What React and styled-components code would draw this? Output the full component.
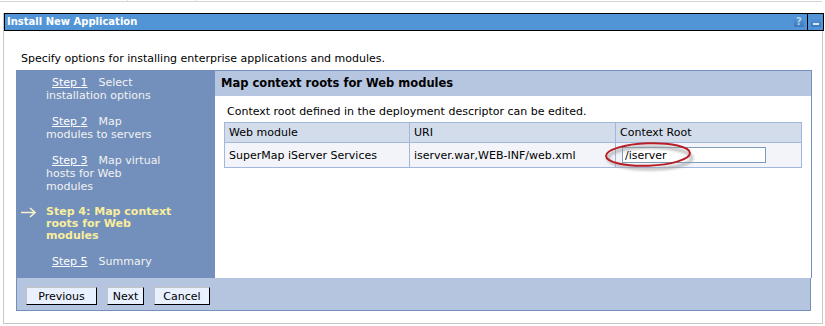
import React from "react";
import styled, { createGlobalStyle } from "styled-components";

const GlobalStyle = createGlobalStyle`
  html, body {
    margin: 0;
    padding: 0;
    background: #ffffff;
  }
  body {
    font-family: "DejaVu Sans", Verdana, sans-serif;
    font-size: 11px;
    color: #000000;
  }
`;

const TopStrip = styled.div`
  display: flex;
  width: 822px;
  height: 1px;
  border-bottom: 1px solid #d6d6d6;
`;

const Tick = styled.div`
  width: ${(p) => p.$w}px;
  height: 1px;
  border-right: 1px solid #e2e2e2;
`;

const Frame = styled.div`
  margin: 11px 0 0 3px;
  width: 818px;
  border: 1px solid #c8c8c8;
  border-top: none;
  padding-bottom: 12px;
`;

const TitleBar = styled.div`
  box-sizing: border-box;
  width: 820px;
  height: 18px;
  display: flex;
  align-items: stretch;
  background: #5295d6;
  border: 1px solid #000000;
`;

const TitleText = styled.div`
  flex: 1;
  padding-left: 2px;
  line-height: 16px;
  font-weight: bold;
  font-size: 10px;
  color: #ffffff;
`;

const TitleCell = styled.div`
  display: flex;
  align-items: center;
  padding: 0 ${(p) => p.$pr}px 0 ${(p) => p.$pl}px;
  border-left: ${(p) => (p.$sep ? "1px solid #000" : "none")};
`;

const IconBox = styled.div`
  width: 10px;
  height: 10px;
  display: flex;
  align-items: center;
  justify-content: center;
  background: linear-gradient(#5a98d8, #3b79bd);
  color: #b9d4ef;
  font-weight: bold;
  font-size: 10px;
  line-height: 10px;
`;

const Dash = styled.div`
  width: 6px;
  height: 2px;
  margin-top: 4px;
  background: #dce8f6;
`;

const Intro = styled.div`
  margin: 21px 0 5px 17px;
  line-height: 13px;
`;

const Panel = styled.div`
  margin-left: 12px;
  width: 795px;
`;

const Body = styled.div`
  display: flex;
  height: 208px;
`;

const Nav = styled.div`
  width: 199px;
  flex-shrink: 0;
  background: #7390bc;
  padding-top: 6px;
  box-sizing: border-box;
  color: #f2f2f2;
`;

const NavItem = styled.div`
  padding-left: 30px;
  line-height: 13px;
  margin-bottom: 13px;
`;

const NavLine = styled.div`
  padding-left: ${(p) => (p.$first ? 6 : 0)}px;
`;

const StepLink = styled.span`
  text-decoration: underline;
  color: #ffffff;
  margin-right: 11px;
`;

const CurrentItem = styled.div`
  display: flex;
  padding-left: 4px;
  margin-bottom: 13px;
  line-height: 12px;
  font-weight: bold;
  color: #f8ee9c;
`;

const Arrow = styled.svg`
  width: 26px;
  height: 12px;
  flex-shrink: 0;
`;

const Main = styled.div`
  flex: 1;
  border-top: 1px solid #7390bc;
  border-right: 1px solid #7390bc;
  background: #ffffff;
`;

const MainHeader = styled.div`
  height: 25px;
  line-height: 25px;
  padding-left: 6px;
  background: #b6c6e0;
  font-weight: bold;
  font-size: 11.5px;
`;

const MainContent = styled.div`
  padding: 9px 9px 0 9px;
`;

const Desc = styled.div`
  padding-left: 3px;
  line-height: 13px;
  margin-bottom: 4px;
`;

const Table = styled.table`
  width: 577px;
  border-collapse: collapse;
  table-layout: fixed;
`;

const Th = styled.th`
  height: 19px;
  padding: 0 0 0 4px;
  text-align: left;
  font-weight: normal;
  background: #d3dceb;
  border: 1px solid #a2b7dc;
`;

const Td = styled.td`
  position: relative;
  height: 24px;
  padding: 0 0 0 4px;
  background: #f2f4f9;
  border: 1px solid #a2b7dc;
`;

const Input = styled.input`
  box-sizing: border-box;
  width: 144px;
  height: 16px;
  margin-left: 2px;
  padding: 0 2px;
  border: 1px solid #7f9db9;
  font-family: "DejaVu Sans", Verdana, sans-serif;
  font-size: 11px;
  background: #ffffff;
  vertical-align: middle;
`;

const Circle = styled.svg`
  position: absolute;
  left: -14px;
  top: -4px;
  pointer-events: none;
`;

const ButtonBar = styled.div`
  display: flex;
  gap: 10px;
  height: 33px;
  padding: 9px 0 0 9px;
  box-sizing: border-box;
  background: #b5c5df;
  border: 1px solid #7390bc;
  border-top: none;
`;

const Button = styled.button`
  box-sizing: border-box;
  width: ${(p) => p.$w}px;
  height: 18px;
  padding: 0;
  background: #e9f0ff;
  border: 1px solid;
  border-color: #c4c4c4 #000000 #000000 #c4c4c4;
  font-family: "DejaVu Sans", Verdana, sans-serif;
  font-size: 11px;
  color: #000000;
`;

const steps = [
  { n: 1, label: "Select", rest: ["installation options"] },
  { n: 2, label: "Map", rest: ["modules to servers"] },
  { n: 3, label: "Map virtual", rest: ["hosts for Web", "modules"] },
];

export default function App() {
  return (
    <>
      <GlobalStyle />
      <TopStrip>
        <Tick $w={127} />
        <Tick $w={67} />
      </TopStrip>
      <Frame>
        <TitleBar>
          <TitleText>Install New Application</TitleText>
          <TitleCell $pl={0} $pr={3}>
            <IconBox>?</IconBox>
          </TitleCell>
          <TitleCell $sep $pl={3} $pr={2}>
            <IconBox>
              <Dash />
            </IconBox>
          </TitleCell>
        </TitleBar>
        <Intro>Specify options for installing enterprise applications and modules.</Intro>
        <Panel>
          <Body>
            <Nav>
              {steps.map((s) => (
                <NavItem key={s.n}>
                  <NavLine $first>
                    <StepLink>Step {s.n}</StepLink>
                    {s.label}
                  </NavLine>
                  {s.rest.map((r) => (
                    <NavLine key={r}>{r}</NavLine>
                  ))}
                </NavItem>
              ))}
              <CurrentItem>
                <Arrow viewBox="0 0 26 12">
                  <path d="M1 6.5 H15 M10 2 L15 6.5 L10 11" fill="none" stroke="#f8f3c8" strokeWidth="1.6" />
                </Arrow>
                <div>
                  Step 4: Map context
                  <br />
                  roots for Web
                  <br />
                  modules
                </div>
              </CurrentItem>
              <NavItem>
                <NavLine $first>
                  <StepLink>Step 5</StepLink>
                  Summary
                </NavLine>
              </NavItem>
            </Nav>
            <Main>
              <MainHeader>Map context roots for Web modules</MainHeader>
              <MainContent>
                <Desc>Context root defined in the deployment descriptor can be edited.</Desc>
                <Table>
                  <colgroup>
                    <col style={{ width: 185 }} />
                    <col style={{ width: 206 }} />
                    <col style={{ width: 186 }} />
                  </colgroup>
                  <thead>
                    <tr>
                      <Th>Web module</Th>
                      <Th>URI</Th>
                      <Th>Context Root</Th>
                    </tr>
                  </thead>
                  <tbody>
                    <tr>
                      <Td>SuperMap iServer Services</Td>
                      <Td>iserver.war,WEB-INF/web.xml</Td>
                      <Td>
                        <Input defaultValue="/iserver" />
                        <Circle width="96" height="34" viewBox="0 0 96 34">
                          <defs>
                            <filter id="blur" x="-20%" y="-40%" width="140%" height="180%">
                              <feGaussianBlur stdDeviation="1.6" />
                            </filter>
                          </defs>
                          <ellipse cx="48" cy="19" rx="42" ry="11" fill="none" stroke="#9a9a9a" strokeWidth="2.5" filter="url(#blur)" opacity="0.8" />
                          <ellipse cx="46" cy="15.5" rx="42" ry="11.2" fill="none" stroke="#b81d25" strokeWidth="2" transform="rotate(-2 46 15.5)" />
                        </Circle>
                      </Td>
                    </tr>
                  </tbody>
                </Table>
              </MainContent>
            </Main>
          </Body>
          <ButtonBar>
            <Button $w={71}>Previous</Button>
            <Button $w={37}>Next</Button>
            <Button $w={56}>Cancel</Button>
          </ButtonBar>
        </Panel>
      </Frame>
    </>
  );
}
